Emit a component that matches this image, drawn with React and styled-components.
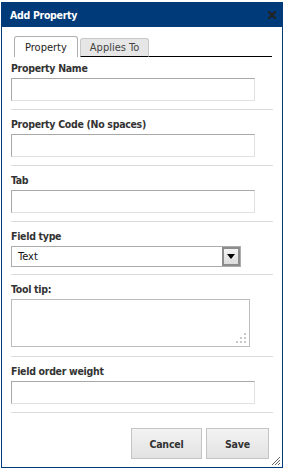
import React from "react";
import styled, { createGlobalStyle } from "styled-components";

const FONT = `"DejaVu Sans Condensed", "DejaVu Sans", Verdana, sans-serif`;

const Global = createGlobalStyle`
  html, body { margin: 0; padding: 0; background: #fff; }
  body { font-family: ${FONT}; }
  * { box-sizing: border-box; }
`;

const Page = styled.div`
  padding: 2px 0 0 1px;
  width: 284px;
  height: 469px;
  overflow: hidden;
`;

const Dialog = styled.div`
  width: 282px;
  height: 466px;
  border: 1px solid #003a78;
  border-top: none;
  display: flex;
  flex-direction: column;
  position: relative;
  background: #fff;
`;

const TitleBar = styled.div`
  height: 25px;
  background: #003a78;
  display: flex;
  align-items: center;
  justify-content: space-between;
  padding: 0 7px 0 9px;
  margin: 0 -1px;
`;

const Title = styled.span`
  color: #fff;
  font-weight: bold;
  font-size: 10.5px;
  letter-spacing: -0.3px;
`;

const Close = styled.svg`
  display: block;
`;

const Body = styled.div`
  padding: 9px 9px 0 9px;
  display: flex;
  flex-direction: column;
`;

const TabRow = styled.div`
  display: flex;
  align-items: flex-end;
  padding-left: 3px;
  height: 21px;
`;

const Tab = styled.div`
  height: ${(p) => (p.$active ? "21px" : "19px")};
  padding: 0 ${(p) => (p.$active ? "10px" : "9px")};
  display: flex;
  align-items: center;
  font-size: 11px;
  color: ${(p) => (p.$active ? "#222" : "#444")};
  background: ${(p) => (p.$active ? "#fff" : "#e6e6e6")};
  border: 1px solid ${(p) => (p.$active ? "#b0b0b0" : "#c8c8c8")};
  border-bottom: ${(p) => (p.$active ? "none" : "1px solid #000")};
  border-radius: 3px 3px 0 0;
  margin-right: 2px;
`;

const TabLine = styled.div`
  flex: 1;
  height: 1px;
  background: #000;
  margin-left: -2px;
  margin-right: 1px;
`;

const Section = styled.div`
  display: flex;
  flex-direction: column;
  padding: ${(p) => p.$pt || "8px"} 0 ${(p) => p.$pb || "8px"} 0;
  border-bottom: 1px solid #dcdcdc;
`;

const Label = styled.label`
  font-size: 10.5px;
  font-weight: bold;
  color: #333;
  letter-spacing: -0.3px;
  height: 13px;
  line-height: 13px;
  margin-bottom: 3px;
`;

const Input = styled.div`
  width: 244px;
  height: 23px;
  border: 1px solid #e2e2e2;
  border-top-color: #a8a8a8;
  border-left-color: #a8a8a8;
  background: #fff;
`;

const Select = styled.div`
  width: 230px;
  height: 21px;
  border: 1px solid #acacac;
  display: flex;
  align-items: center;
  justify-content: space-between;
  font-size: 11px;
  color: #111;
  padding-left: 6px;
`;

const SelectBtn = styled.div`
  width: 18px;
  height: 19px;
  border: 2px solid #8c8c8c;
  background: linear-gradient(#f4f4f4, #dcdcdc);
  display: flex;
  align-items: center;
  justify-content: center;
`;

const TextArea = styled.div`
  width: 239px;
  height: 48px;
  border: 1px solid #bdbdbd;
  position: relative;
`;

const Grip = styled.svg`
  position: absolute;
  right: 2px;
  bottom: 2px;
`;

const Footer = styled.div`
  display: flex;
  justify-content: flex-end;
  gap: 4px;
  padding: 15px 4px 0 0;
`;

const Button = styled.button`
  width: ${(p) => p.$w};
  height: 31px;
  border: 1px solid #c4c4c4;
  background: linear-gradient(#f3f3f3, #e2e2e2);
  font-family: ${FONT};
  font-size: 10.5px;
  font-weight: bold;
  color: #333;
  letter-spacing: -0.2px;
`;

const Resize = styled.svg`
  position: absolute;
  right: 1px;
  bottom: 1px;
`;

export default function App() {
  return (
    <Page>
      <Global />
      <Dialog>
        <TitleBar>
          <Title>Add Property</Title>
          <Close width="8" height="8" viewBox="0 0 8 8">
            <path d="M1 1L7 7M7 1L1 7" stroke="#222" strokeWidth="2.2" strokeLinecap="square" />
          </Close>
        </TitleBar>
        <Body>
          <TabRow>
            <Tab $active>Property</Tab>
            <Tab>Applies To</Tab>
            <TabLine />
          </TabRow>
          <Section $pt="5px">
            <Label>Property Name</Label>
            <Input />
          </Section>
          <Section>
            <Label>Property Code (No spaces)</Label>
            <Input />
          </Section>
          <Section>
            <Label>Tab</Label>
            <Input />
          </Section>
          <Section $pb="7px">
            <Label>Field type</Label>
            <Select>
              Text
              <SelectBtn>
                <svg width="8" height="5" viewBox="0 0 8 5">
                  <path d="M0 0h8L4 5z" fill="#000" />
                </svg>
              </SelectBtn>
            </Select>
          </Section>
          <Section $pb="9px">
            <Label>Tool tip:</Label>
            <TextArea>
              <Grip width="11" height="11" viewBox="0 0 11 11">
                <g fill="#c8c8c8">
                  <rect x="8" y="0" width="2" height="2" />
                  <rect x="4" y="4" width="2" height="2" />
                  <rect x="8" y="4" width="2" height="2" />
                  <rect x="0" y="8" width="2" height="2" />
                  <rect x="4" y="8" width="2" height="2" />
                  <rect x="8" y="8" width="2" height="2" />
                </g>
              </Grip>
            </TextArea>
          </Section>
          <Section>
            <Label>Field order weight</Label>
            <Input />
          </Section>
          <Footer>
            <Button $w="71px">Cancel</Button>
            <Button $w="63px">Save</Button>
          </Footer>
        </Body>
        <Resize width="10" height="10" viewBox="0 0 10 10">
          <g stroke="#666" strokeWidth="1">
            <line x1="9" y1="1" x2="1" y2="9" />
            <line x1="9" y1="4" x2="4" y2="9" />
            <line x1="9" y1="7" x2="7" y2="9" />
          </g>
        </Resize>
      </Dialog>
    </Page>
  );
}
